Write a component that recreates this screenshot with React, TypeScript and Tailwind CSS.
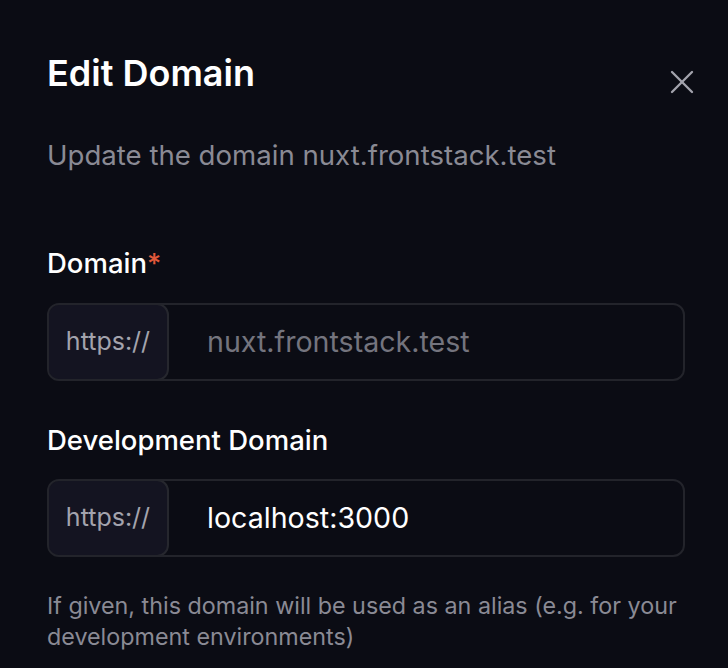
import { X } from 'lucide-react'

function PrefixedInput({ value, placeholder }: { value?: string; placeholder?: string }) {
  return (
    <div className="flex h-[78px] w-[638px] rounded-[12px] border-2 border-[#23242b] overflow-hidden">
      <div className="-my-[2px] -ml-[2px] flex h-[78px] w-[122px] shrink-0 items-center justify-center rounded-[12px] border-2 border-[#26272e] bg-[#141421] text-[25px] text-[#a3a3ad]">
        https://
      </div>
      <input
        readOnly
        value={value ?? ''}
        placeholder={placeholder}
        className="min-w-0 flex-1 bg-transparent pl-[38px] text-[28.6px] text-white placeholder:text-[#74747e] outline-none"
      />
    </div>
  )
}

export default function App() {
  return (
    <div
      className="relative h-[668px] w-[728px] overflow-hidden bg-[#0b0c14] pl-[47px] pt-[51px]"
      style={{ fontFamily: 'Inter, "Noto Sans", sans-serif' }}
    >
      <h1 className="text-[36px] font-semibold leading-[44px] text-white">Edit Domain</h1>
      <button className="absolute right-[26px] top-[62px] text-[#a3a3ad]">
        <X size={40} strokeWidth={1.4} />
      </button>
      <p className="mt-[43px] text-[27.6px] leading-[34px] text-[#8a8a94]">Update the domain nuxt.frontstack.test</p>

      <label className="mt-[74px] block text-[27.5px] font-medium leading-[34px] text-white">
        Domain<span className="text-[#e0583a]">*</span>
      </label>
      <div className="mt-[23px]">
        <PrefixedInput placeholder="nuxt.frontstack.test" />
      </div>

      <label className="mt-[42px] block text-[27.5px] font-medium leading-[34px] text-white">Development Domain</label>
      <div className="mt-[22px]">
        <PrefixedInput value="localhost:3000" />
      </div>

      <p className="mt-[33px] w-[650px] text-[23.3px] leading-[31px] text-[#8a8a94]">
        If given, this domain will be used as an alias (e.g. for your development environments)
      </p>
    </div>
  )
}
